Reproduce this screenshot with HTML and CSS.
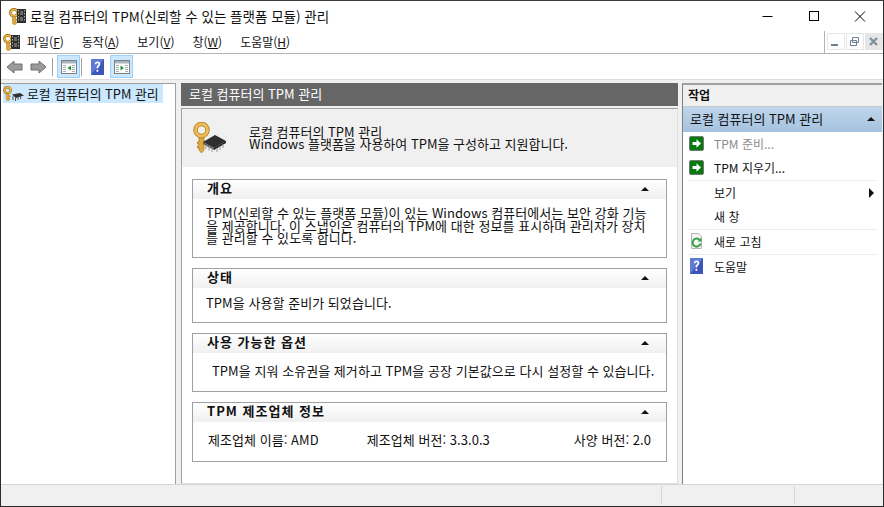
FILE: index.html
```html
<!DOCTYPE html>
<html lang="ko">

<head>
    <meta charset="UTF-8">
    <meta name="viewport" content="width=device-width, initial-scale=1.0">
    <title>로컬 컴퓨터의 TPM 관리</title>
    <link rel="stylesheet" href="styles.css">
</head>

<body>

    <svg class="defs" width="0" height="0">
        <symbol id="key" viewBox="0 0 11 17">
            <circle cx="5" cy="4.800" r="3.500" fill="none" stroke="#9a6a14" stroke-width="2.800"/>
            <circle cx="5" cy="4.800" r="3.300" fill="none" stroke="#edb84a" stroke-width="1.600"/>
            <path d="M3.500 8.500h3V11h1.500v1.500H6.500V14h1v1.500l-2 1.500-2-1.500z" fill="#e3a63a" stroke="#a8761c" stroke-width=".5"/>
        </symbol>
        <symbol id="film" viewBox="0 0 9 14">
            <path d="M0 0h9v14H0z" fill="#2e2e2e"/>
            <path d="M1 1h1v1.500H1zM1 4h1v1.500H1zM1 7h1v1.500H1zM1 10h1v1.500H1zM7 1h1v1.500H7zM7 4h1v1.500H7zM7 7h1v1.500H7zM7 10h1v1.500H7z" fill="#a8a8a8"/>
            <path d="M3 2h3v4H3zM3 8h3v4H3z" fill="#6a6a6a"/>
        </symbol>
        <symbol id="go" viewBox="0 0 15 15">
            <rect x=".5" y=".5" width="14" height="14" rx="1.500" fill="#067a0a" stroke="#777"/>
            <path d="M3.500 6h4V3.200L12 7.500 7.500 11.800V9h-4z" fill="#fff"/>
        </symbol>
        <symbol id="help" viewBox="0 0 13 16">
            <rect width="13" height="16" fill="#3c55b8"/>
            <path d="M0 0h13L0 16z" fill="#5f7bd6"/>
            <path d="M3.800 5.200C3.800 3.300 5 2.400 6.600 2.400s2.800 1 2.800 2.600c0 2.300-2.200 2.200-2.200 4.600H5.600C5.500 6.700 7.500 6.500 7.500 5c0-.7-.4-1.100-1-1.100s-1 .5-1 1.300zM5.500 10.800h1.800v1.900H5.500z" fill="#fff"/>
        </symbol>
        <symbol id="pane" viewBox="0 0 16 16">
            <rect x=".5" y="1.500" width="15" height="13" fill="#fff" stroke="#7a8288"/>
            <path d="M1 2h14v2.500H1z" fill="#a9b4bc"/>
            <path d="M2 6h3v1H2zM2 8h3v1H2zM2 10h3v1H2zM2 12h3v1H2zM11 6h3v1h-3zM11 8h3v1h-3zM11 10h3v1h-3zM11 12h3v1h-3z" fill="#a8b0b6"/>
        </symbol>
    </svg>

    <div class="window">

        <header class="titlebar">
            <span class="app-icon"><svg width="11" height="17"><use href="#key"/></svg><svg class="film" width="9" height="14"><use href="#film"/></svg></span>
            <span class="title-text">로컬 컴퓨터의 TPM(신뢰할 수 있는 플랫폼 모듈) 관리</span>
            <div class="caption-btns">
                <svg width="46" height="30"><path d="M17.500 15.500h10" stroke="#000"/></svg>
                <svg width="46" height="30"><rect x="18.500" y="10.500" width="9" height="9" fill="none" stroke="#000"/></svg>
                <svg width="46" height="30"><path d="M18 10.500l10 10M28 10.500l-10 10" stroke="#000"/></svg>
            </div>
        </header>

        <nav class="menubar">
            <div class="menu-main">
                <span class="app-icon small"><svg width="11" height="17"><use href="#key"/></svg><svg class="film" width="9" height="14"><use href="#film"/></svg></span>
                <span class="menu-item">파일(<u>F</u>)</span>
                <span class="menu-item">동작(<u>A</u>)</span>
                <span class="menu-item">보기(<u>V</u>)</span>
                <span class="menu-item">창(<u>W</u>)</span>
                <span class="menu-item">도움말(<u>H</u>)</span>
            </div>
            <div class="mdi-btns">
                <span class="mdi-btn"><svg width="16" height="16"><path d="M3 10h7v2H3z" fill="#6d7f90"/></svg></span>
                <span class="mdi-btn"><svg width="16" height="16"><path d="M5.500 3.500h6v5h-6zM3.500 6.500h6v5h-6z" fill="#fff" stroke="#6d7f90"/></svg></span>
                <span class="mdi-btn close"><svg width="16" height="16"><path d="M4 4l7 7M11 4l-7 7" stroke="#7f929f" stroke-width="2.400"/></svg></span>
            </div>
        </nav>

        <div class="toolbar">
            <svg width="18" height="16" class="arrow"><path d="M1 8l7-6v3h8v6H8v3z" fill="#9a9a9a" stroke="#6e6e6e"/></svg>
            <svg width="18" height="16" class="arrow"><path d="M17 8l-7-6v3H2v6h8v3z" fill="#9a9a9a" stroke="#6e6e6e"/></svg>
            <span class="tool-sep"></span>
            <span class="tool-btn on"><svg width="16" height="16"><use href="#pane"/><path d="M10 6.500v5L6.500 9z" fill="#1e9a2a"/></svg></span>
            <span class="tool-sep"></span>
            <span class="tool-btn"><svg width="13" height="16"><use href="#help"/></svg></span>
            <span class="tool-btn on"><svg width="16" height="16"><use href="#pane"/><path d="M6.500 6.500v5L10 9z" fill="#1e9a2a"/></svg></span>
        </div>

        <div class="panes">

            <aside class="tree">
                <div class="tree-row">
                    <span class="tree-icon"><svg width="10" height="15"><use href="#key"/></svg><svg class="chip" width="13" height="8" viewBox="0 0 13 8"><path d="M1 1.500L9 0l4 2.500-8 2.500z" fill="#333"/><path d="M2 3v4M4.500 4v4M7 4v3M9.500 3v3" stroke="#555"/></svg></span>
                    <span class="tree-label">로컬 컴퓨터의 TPM 관리</span>
                </div>
            </aside>

            <main class="center">
                <div class="center-head">로컬 컴퓨터의 TPM 관리</div>
                <div class="center-body">
                    <div class="intro">
                        <svg class="intro-icon" width="34" height="32" viewBox="0 0 34 32">
                            <path d="M6 14h5v14l-2.500 3L6 28v-2h-1.500v-2H6v-2H4.500v-2H6z" fill="#e3a63a" stroke="#a8761c" stroke-width=".7"/>
                            <circle cx="8.500" cy="8" r="6" fill="none" stroke="#a8761c" stroke-width="4.400"/>
                            <circle cx="8.500" cy="8" r="6" fill="none" stroke="#f0bd55" stroke-width="2.800"/>
                            <path d="M10 20l12-7 11 6-12 7z" fill="#2e2e2e"/>
                            <path d="M10 20l11 6v2l-11-6z" fill="#5c5c5c"/>
                            <path d="M21 26l12-7v2l-12 7z" fill="#1d1d1d"/>
                            <path d="M13 23v4M16 24.500v4M19 26v4M24 26v4M27 24v4M30 22v4" stroke="#999"/>
                        </svg>
                        <p class="intro-text">로컬 컴퓨터의 TPM 관리
Windows 플랫폼을 사용하여 TPM을 구성하고 지원합니다.</p>
                    </div>

                    <section class="panel">
                        <div class="panel-head"><span>개요</span><i class="caret"></i></div>
                        <p class="panel-body overview">TPM(신뢰할 수 있는 플랫폼 모듈)이 있는 Windows 컴퓨터에서는 보안 강화 기능
을 제공합니다. 이 스냅인은 컴퓨터의 TPM에 대한 정보를 표시하며 관리자가 장치
를 관리할 수 있도록 합니다.</p>
                    </section>

                    <section class="panel">
                        <div class="panel-head"><span>상태</span><i class="caret"></i></div>
                        <p class="panel-body status">TPM을 사용할 준비가 되었습니다.</p>
                    </section>

                    <section class="panel">
                        <div class="panel-head"><span>사용 가능한 옵션</span><i class="caret"></i></div>
                        <p class="panel-body options">TPM을 지워 소유권을 제거하고 TPM을 공장 기본값으로 다시 설정할 수 있습니다.</p>
                    </section>

                    <section class="panel">
                        <div class="panel-head"><span>TPM 제조업체 정보</span><i class="caret"></i></div>
                        <div class="panel-body vendor">
                            <span>제조업체 이름: AMD</span>
                            <span class="vendor-version">제조업체 버전: 3.3.0.3</span>
                            <span class="vendor-spec">사양 버전: 2.0</span>
                        </div>
                    </section>
                </div>
            </main>

            <aside class="actions">
                <div class="actions-head">작업</div>
                <div class="actions-sub"><span>로컬 컴퓨터의 TPM 관리</span><i class="caret"></i></div>
                <ul class="action-list">
                    <li class="action disabled"><svg width="15" height="15"><use href="#go"/></svg><span>TPM 준비...</span></li>
                    <li class="action rule"><svg width="15" height="15"><use href="#go"/></svg><span>TPM 지우기...</span></li>
                    <li class="action"><i class="no-icon"></i><span>보기</span><i class="submenu"></i></li>
                    <li class="action rule"><i class="no-icon"></i><span>새 창</span></li>
                    <li class="action rule">
                        <svg width="15" height="16" viewBox="0 0 15 16"><path d="M2.500 .5h7l3 3v12h-10z" fill="#f6f6f6" stroke="#b5b5b5"/><path d="M10.800 7.200A4 4 0 1 0 11.500 10.500" fill="none" stroke="#3aa045" stroke-width="2"/><path d="M12.500 4.500v4h-4z" fill="#3aa045"/></svg>
                        <span>새로 고침</span>
                    </li>
                    <li class="action"><svg width="15" height="16"><use href="#help"/></svg><span>도움말</span></li>
                </ul>
            </aside>

        </div>

        <footer class="statusbar">
            <span class="status-cell wide"></span>
            <span class="status-cell mid"></span>
            <span class="status-cell"></span>
        </footer>

    </div>

</body>
</html>
```

FILE: styles.css
```css
* {
    box-sizing: border-box;
}

html,
body {
    margin: 0;
    height: 100%;
    overflow: hidden;
}

body {
    font-family: "Noto Sans CJK KR", "Liberation Sans", sans-serif;
    font-size: 12px;
    color: #111;
    background-color: #fff;
}

.defs {
    display: block;
    height: 0;
}

.window {
    display: flex;
    flex-direction: column;
    height: 507px;
    border: 1px solid #2b2b2b;
    border-top-color: #3a3a3a;
    background-color: #fff;
}

/* title bar */
.titlebar {
    display: flex;
    align-items: center;
    height: 30px;
    flex: none;
    padding-left: 8px;
}

.app-icon {
    display: flex;
    align-items: center;
    width: 21px;
    flex: none;
}

.app-icon .film {
    margin-left: -3px;
}

.title-text {
    font-size: 13.500px;
    flex: 1;
}

.caption-btns {
    display: flex;
    flex: none;
}

/* menu */
.menubar {
    display: flex;
    height: 23px;
    flex: none;
}

.menu-main {
    display: flex;
    align-items: center;
    flex: 1;
    padding-left: 2px;
    border-bottom: 1px solid #b4b4b4;
    border-right: 1px solid #b4b4b4;
}

.app-icon.small {
    width: 24px;
}

.menu-item {
    margin-right: 18px;
    padding-bottom: 2px;
    font-size: 12px;
}

.mdi-btns {
    display: flex;
    gap: 1px;
    width: 58px;
    padding: 2px 0 3px 2px;
    border-bottom: 1px solid #b4b4b4;
}

.mdi-btn {
    display: flex;
    align-items: center;
    justify-content: center;
    width: 18px;
    border: 1px solid #e6e6e6;
}

.mdi-btn.close {
    background-color: #e6e6e6;
    border: none;
}

/* toolbar */
.toolbar {
    display: flex;
    align-items: center;
    height: 26px;
    flex: none;
    padding-left: 5px;
    border-bottom: 1px solid #dcdcdc;
}

.arrow {
    margin-right: 5px;
}

.tool-sep {
    width: 1px;
    height: 18px;
    margin-right: 4px;
    background-color: #a0a0a0;
}

.tool-btn {
    display: flex;
    align-items: center;
    justify-content: center;
    width: 23px;
    height: 23px;
    margin-right: 1px;
}

.tool-btn.on {
    background-color: #cce8ff;
    border: 1px solid #99d1ff;
}

/* panes */
.panes {
    display: flex;
    flex: 1;
    min-height: 0;
    padding-top: 3px;
    background-color: #f0f0f0;
}

.tree {
    width: 175px;
    flex: none;
    margin-right: 5px;
    background-color: #fff;
    border: 1px solid #a0a0a0;
    border-width: 1px 1px 0 0;
}

.tree-row {
    display: flex;
    align-items: center;
    height: 19px;
    margin-left: 2px;
    width: 160px;
    background-color: #cce8ff;
    white-space: nowrap;
}

.tree-icon {
    display: flex;
    align-items: center;
    width: 24px;
    flex: none;
}

.tree-icon .chip {
    margin: 6px 0 0 -2px;
}

.tree-label {
    font-size: 12.850px;
    padding-bottom: 1px;
}

.center {
    display: flex;
    flex-direction: column;
    width: 497px;
    flex: none;
    margin-right: 4px;
}

.center-head {
    height: 23px;
    flex: none;
    padding-left: 8px;
    line-height: 22px;
    font-size: 13px;
    color: #fff;
    background-color: #666;
}

.center-body {
    flex: 1;
    margin-top: 2px;
    padding: 0 10px;
    background-color: #fff;
    border: 1px solid #e0e0e0;
    border-left-color: #a0a0a0;
    border-top-color: #a0a0a0;
}

.intro {
    display: flex;
    align-items: center;
    height: 58px;
    margin: 0 -10px 12px -10px;
    padding-left: 11px;
    background-color: #f0f0f0;
}

.intro-icon {
    flex: none;
    margin-right: 22px;
}

.intro-text {
    margin: 0;
    font-size: 13px;
    line-height: 12px;
    white-space: pre-line;
}

.panel {
    border: 1px solid #a0a0a0;
    margin-bottom: 10px;
}

.panel-head {
    display: flex;
    align-items: center;
    justify-content: space-between;
    height: 19px;
    padding: 0 17px 5px 14px;
    font-size: 13px;
    font-weight: 700;
    letter-spacing: 1px;
    background: linear-gradient(#ffffff, #f0f0f0);
}

.caret {
    width: 0;
    height: 0;
    border-left: 4px solid transparent;
    border-right: 4px solid transparent;
    border-bottom: 4px solid #111;
}

.panel-head .caret {
    margin-top: 4px;
}

.panel-body {
    margin: 0;
    padding: 0 13px;
    font-size: 13px;
    letter-spacing: .05px;
}

.overview {
    height: 58px;
    padding-top: 8px;
    line-height: 12.500px;
    white-space: pre-line;
}

.status {
    height: 34px;
    padding-top: 8px;
    line-height: 14px;
}

.options {
    height: 38px;
    padding: 11px 0 0 19px;
    line-height: 14px;
    white-space: nowrap;
}

.vendor {
    display: flex;
    height: 39px;
    padding: 11px 15px 0 15px;
    line-height: 14px;
}

.vendor-version {
    margin-left: 48px;
}

.vendor-spec {
    margin-left: auto;
}

/* actions pane */
.actions {
    flex: 1;
    margin-right: 1px;
    background-color: #fff;
    border-left: 1px solid #808080;
    border-top: 2px solid #a0a0a0;
}

.actions-head {
    height: 22px;
    padding-left: 5px;
    line-height: 20px;
    font-weight: 700;
    background-color: #f0f0f0;
    border-bottom: 1px solid #c8c8c8;
}

.actions-sub {
    display: flex;
    align-items: center;
    justify-content: space-between;
    height: 25px;
    padding: 0 7px 2px 7px;
    font-size: 13px;
    background: linear-gradient(#bed6ec, #a5c2de);
}

.action-list {
    list-style: none;
    margin: 0;
    padding: 0 5px;
}

.action {
    display: flex;
    align-items: center;
    height: 24px;
    padding: 0 0 2px 1px;
    position: relative;
}

.action.rule {
    height: 25px;
    border-bottom: 1px solid #ececec;
}

.action svg,
.no-icon {
    width: 15px;
    flex: none;
    margin-right: 10px;
}

.action.disabled {
    color: #8c8c8c;
}

.submenu {
    position: absolute;
    right: 3px;
    top: 7px;
    border-left: 5px solid #111;
    border-top: 5px solid transparent;
    border-bottom: 5px solid transparent;
}

/* status bar */
.statusbar {
    display: flex;
    height: 22px;
    flex: none;
    background-color: #f0f0f0;
    border-top: 1px solid #d4d4d4;
}

.status-cell {
    flex: 1;
    margin: 1px 0;
}

.status-cell.wide {
    flex: none;
    width: 661px;
    border-right: 1px solid #d4d4d4;
}

.status-cell.mid {
    flex: none;
    width: 133px;
    border-right: 1px solid #d4d4d4;
}
```
